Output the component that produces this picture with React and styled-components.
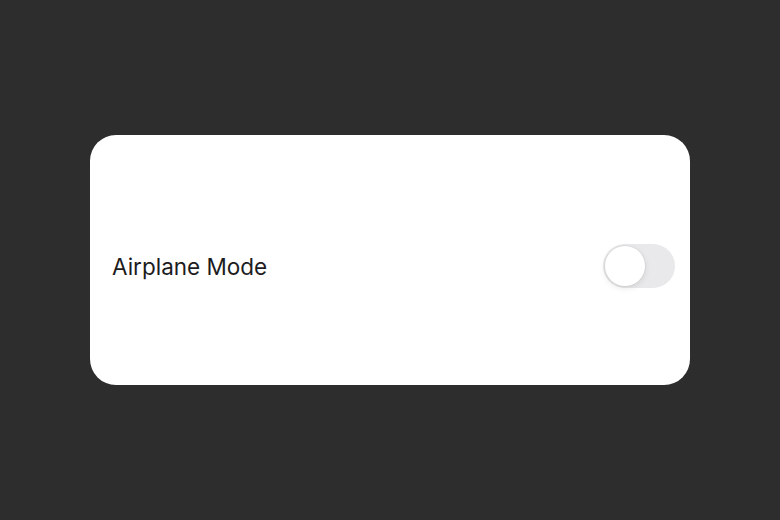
import React, { useState } from "react";
import styled, { createGlobalStyle } from "styled-components";

const GlobalStyle = createGlobalStyle`
  html, body {
    margin: 0;
    height: 100%;
    background: #2d2d2d;
  }
  #root {
    height: 100%;
  }
`;

const Page = styled.div`
  height: 100%;
  display: flex;
  align-items: center;
  justify-content: center;
  font-family: Inter, "Liberation Sans", sans-serif;
`;

const Card = styled.div`
  width: 600px;
  height: 250px;
  background: #ffffff;
  border-radius: 26px;
  display: flex;
  align-items: center;
  box-sizing: border-box;
  padding: 12px 15px 0 22px;
`;

const Row = styled.label`
  flex: 1;
  display: flex;
  align-items: center;
  justify-content: space-between;
`;

const Label = styled.span`
  font-size: 22.5px;
  color: #1c1c1e;
`;

const Track = styled.button`
  width: 72px;
  height: 44px;
  border: none;
  padding: 2px;
  border-radius: 22px;
  background: ${(p) => (p.$on ? "#34c759" : "#e9e9eb")};
  display: flex;
  justify-content: ${(p) => (p.$on ? "flex-end" : "flex-start")};
  align-items: center;
  cursor: pointer;
`;

const Thumb = styled.span`
  width: 40px;
  height: 40px;
  border-radius: 50%;
  background: #ffffff;
  box-shadow: 0 0 0 1px rgba(0, 0, 0, 0.04), 0 2px 6px rgba(0, 0, 0, 0.1);
`;

export default function App() {
  const [on, setOn] = useState(false);
  return (
    <>
      <GlobalStyle />
      <Page>
        <Card>
          <Row>
            <Label>Airplane Mode</Label>
            <Track $on={on} onClick={() => setOn(!on)} aria-pressed={on}>
              <Thumb />
            </Track>
          </Row>
        </Card>
      </Page>
    </>
  );
}
